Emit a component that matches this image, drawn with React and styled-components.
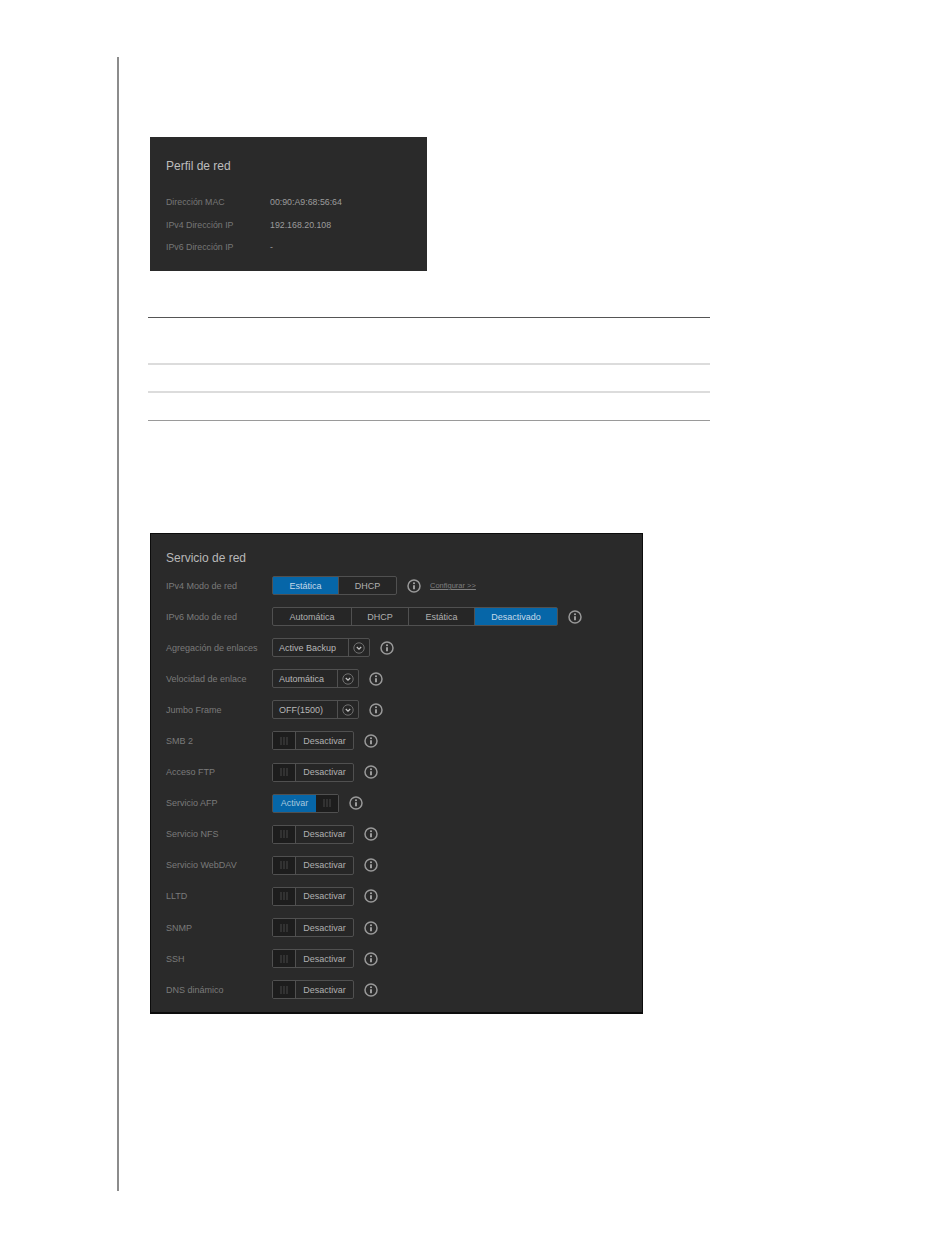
import React from "react";
import styled, { createGlobalStyle } from "styled-components";

const Global = createGlobalStyle`
  html, body { margin: 0; padding: 0; background: #fff; }
  body { font-family: "Liberation Sans", Arial, sans-serif; }
`;

const Page = styled.div`
  width: 950px;
  height: 1248px;
  box-sizing: border-box;
  padding: 57px 0 0 117px;
`;

const Content = styled.main`
  width: 593px;
  height: 1134px;
  box-sizing: border-box;
  border-left: 2px solid #8c8c8c;
  padding: 80px 0 0 29px;
  display: flex;
  flex-direction: column;
`;

const ProfilePanel = styled.section`
  width: 277px;
  height: 134px;
  margin-left: 2px;
  box-sizing: border-box;
  background: #2a2a2a;
  padding: 22px 16px 0;
`;

const ProfileTitle = styled.h2`
  margin: 0 0 24px;
  font-size: 12px;
  line-height: 14px;
  font-weight: 400;
  color: #bdbdbd;
`;

const ProfileRow = styled.div`
  display: grid;
  grid-template-columns: 104px 1fr;
  height: 22.5px;
  font-size: 8.8px;
  line-height: 11px;
`;

const ProfileLabel = styled.span`
  color: #777;
`;

const ProfileValue = styled.span`
  color: #9c9c9c;
`;

const RuleTable = styled.div`
  width: 562px;
  margin-top: 46px;
`;

const Rule = styled.div`
  height: ${(p) => p.$h}px;
  box-sizing: border-box;
  border-top: ${(p) => p.$w || 1}px solid ${(p) => p.$c};
`;

const ServicePanel = styled.section`
  width: 493px;
  height: 481px;
  margin: 111px 0 0 2px;
  box-sizing: border-box;
  background: #2a2a2a;
  border: 1px solid #0c0c0c;
  border-bottom-width: 2px;
  padding: 16px 0 0 15px;
`;

const ServiceTitle = styled.h2`
  margin: 0 0 10px;
  font-size: 12px;
  line-height: 16px;
  font-weight: 400;
  color: #b8b8b8;
`;

const Rows = styled.div`
  display: flex;
  flex-direction: column;
  gap: 12.1px;
`;

const Row = styled.div`
  display: flex;
  align-items: center;
  height: 19px;
`;

const Label = styled.span`
  width: 106px;
  flex: none;
  font-size: 9px;
  color: #7a7a7a;
  white-space: nowrap;
`;

const Group = styled.div`
  display: flex;
  height: 19px;
  box-sizing: border-box;
  border: 1px solid #505050;
  border-radius: 2px;
  background: #262626;
`;

const Segment = styled.span`
  width: ${(p) => p.$w}px;
  box-sizing: border-box;
  display: flex;
  align-items: center;
  justify-content: center;
  font-size: 9px;
  color: ${(p) => (p.$on ? "#c4d9e8" : "#b0b0b0")};
  background: ${(p) => (p.$on ? "#0666a8" : "transparent")};
  & + & {
    border-left: 1px solid #505050;
  }
`;

const SelectText = styled.span`
  width: ${(p) => p.$w}px;
  box-sizing: border-box;
  padding-left: 6px;
  display: flex;
  align-items: center;
  font-size: 9px;
  color: #b8b8b8;
  white-space: nowrap;
`;

const SelectArrow = styled.span`
  width: 21px;
  box-sizing: border-box;
  display: flex;
  align-items: center;
  justify-content: center;
  border-left: 1px solid #505050;
  svg { display: block; }
`;

const Knob = styled.span`
  width: 22px;
  display: flex;
  align-items: center;
  justify-content: center;
  background: #1d1d1d;
  svg { display: block; }
`;

const ToggleLabel = styled.span`
  width: ${(p) => p.$w}px;
  box-sizing: border-box;
  display: flex;
  align-items: center;
  justify-content: center;
  font-size: 9px;
  color: ${(p) => (p.$on ? "#a9c8de" : "#b0b0b0")};
  background: ${(p) => (p.$on ? "#0666a8" : "transparent")};
  border-left: ${(p) => (p.$on ? "0" : "1px solid #505050")};
`;

const InfoWrap = styled.span`
  margin-left: 10px;
  display: flex;
  svg { display: block; }
`;

const ConfigLink = styled.a`
  margin-left: 9px;
  font-size: 7.5px;
  color: #7f7f7f;
  text-decoration: underline;
`;

const Info = () => (
  <InfoWrap>
    <svg width="14" height="14" viewBox="0 0 14 14" fill="none">
      <circle cx="7" cy="7" r="6" stroke="#999" strokeWidth="1.5" />
      <circle cx="7" cy="4.2" r="1" fill="#aaa" />
      <path d="M7 6.2v4" stroke="#aaa" strokeWidth="1.8" />
    </svg>
  </InfoWrap>
);

const Chevron = () => (
  <svg width="12" height="12" viewBox="0 0 12 12" fill="none">
    <circle cx="6" cy="6" r="5.2" stroke="#6f6f6f" strokeWidth="1" />
    <path d="M3.8 5l2.2 2.2L8.2 5" stroke="#c8c8c8" strokeWidth="1.2" />
  </svg>
);

const Grip = () => (
  <svg width="8" height="8" viewBox="0 0 8 8">
    <path d="M1 0v8M4 0v8M7 0v8" stroke="#484848" strokeWidth="1" />
  </svg>
);

const Off = () => (
  <>
    <Group>
      <Knob><Grip /></Knob>
      <ToggleLabel $w={58}>Desactivar</ToggleLabel>
    </Group>
    <Info />
  </>
);

const Select = ({ text, w }) => (
  <>
    <Group>
      <SelectText $w={w}>{text}</SelectText>
      <SelectArrow><Chevron /></SelectArrow>
    </Group>
    <Info />
  </>
);

const offRows1 = ["SMB 2", "Acceso FTP"];
const offRows2 = ["Servicio NFS", "Servicio WebDAV", "LLTD", "SNMP", "SSH", "DNS dinámico"];

export default function App() {
  return (
    <Page>
      <Global />
      <Content>
        <ProfilePanel>
          <ProfileTitle>Perfil de red</ProfileTitle>
          <ProfileRow><ProfileLabel>Dirección MAC</ProfileLabel><ProfileValue>00:90:A9:68:56:64</ProfileValue></ProfileRow>
          <ProfileRow><ProfileLabel>IPv4 Dirección IP</ProfileLabel><ProfileValue>192.168.20.108</ProfileValue></ProfileRow>
          <ProfileRow><ProfileLabel>IPv6 Dirección IP</ProfileLabel><ProfileValue>-</ProfileValue></ProfileRow>
        </ProfilePanel>

        <RuleTable>
          <Rule $h={46} $c="#555" />
          <Rule $h={28} $c="#dcdcdc" $w={2} />
          <Rule $h={29} $c="#dcdcdc" $w={2} />
          <Rule $h={2} $c="#9a9a9a" />
        </RuleTable>

        <ServicePanel>
          <ServiceTitle>Servicio de red</ServiceTitle>
          <Rows>
            <Row>
              <Label>IPv4 Modo de red</Label>
              <Group>
                <Segment $w={65} $on>Estática</Segment>
                <Segment $w={58}>DHCP</Segment>
              </Group>
              <Info />
              <ConfigLink>Configurar &gt;&gt;</ConfigLink>
            </Row>
            <Row>
              <Label>IPv6 Modo de red</Label>
              <Group>
                <Segment $w={78}>Automática</Segment>
                <Segment $w={57}>DHCP</Segment>
                <Segment $w={66}>Estática</Segment>
                <Segment $w={83} $on>Desactivado</Segment>
              </Group>
              <Info />
            </Row>
            <Row><Label>Agregación de enlaces</Label><Select text="Active Backup" w={75} /></Row>
            <Row><Label>Velocidad de enlace</Label><Select text="Automática" w={64} /></Row>
            <Row><Label>Jumbo Frame</Label><Select text="OFF(1500)" w={64} /></Row>
            {offRows1.map((l) => <Row key={l}><Label>{l}</Label><Off /></Row>)}
            <Row>
              <Label>Servicio AFP</Label>
              <Group>
                <ToggleLabel $w={43} $on>Activar</ToggleLabel>
                <Knob><Grip /></Knob>
              </Group>
              <Info />
            </Row>
            {offRows2.map((l) => <Row key={l}><Label>{l}</Label><Off /></Row>)}
          </Rows>
        </ServicePanel>
      </Content>
    </Page>
  );
}
